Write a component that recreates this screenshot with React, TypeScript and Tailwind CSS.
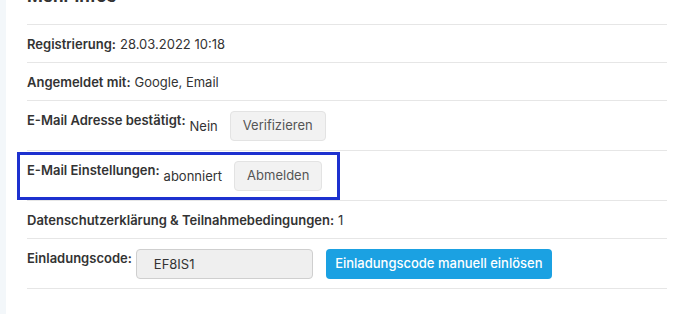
import React from "react";

type Row = {
  label: string;
  value?: string;
  button?: string;
  highlight?: boolean;
};

const rows: Row[] = [
  { label: "Registrierung:", value: "28.03.2022 10:18" },
  { label: "Angemeldet mit:", value: "Google, Email" },
  { label: "E-Mail Adresse bestätigt:", value: "Nein", button: "Verifizieren" },
  {
    label: "E-Mail Einstellungen:",
    value: "abonniert",
    button: "Abmelden",
    highlight: true,
  },
  { label: "Datenschutzerklärung & Teilnahmebedingungen:", value: "1" },
];

export default function App() {
  return (
    <div
      className="flex h-[314px] w-[688px] overflow-hidden bg-[#f3f7fa] text-[13px] text-[#333]"
      style={{ fontFamily: "Inter, 'Noto Sans', sans-serif" }}
    >
      <div className="ml-[6px] flex-1 bg-white px-[21px]">
        <h2 className="-mt-[14px] mb-[18px] text-[17px] font-bold leading-[20px] text-[#333]">
          Mehr Infos
        </h2>

        <div className="border-t border-[#e6e6e6]">
          {rows.map((row) => (
            <div
              key={row.label}
              className="relative flex items-start border-b border-[#e6e6e6] pt-[10px] pb-[9px]"
            >
              <span className="font-semibold leading-[18px]">{row.label}</span>

              {row.button ? (
                <div className="flex items-center">
                  <span className="ml-[4px] leading-[30px]">{row.value}</span>
                  <button
                    type="button"
                    className="ml-[12px] h-[30px] rounded-[4px] border border-[#e3e3e3] bg-[#f2f2f2] px-[12px] text-[13px] text-[#555]"
                  >
                    {row.button}
                  </button>
                </div>
              ) : (
                <span className="ml-[4px] leading-[18px]">{row.value}</span>
              )}

              {row.highlight && (
                <div className="pointer-events-none absolute -left-[10px] top-[1px] h-[48px] w-[323px] border-[3px] border-[#1d31cf]" />
              )}
            </div>
          ))}

          <div className="flex items-start border-b border-[#e6e6e6] pt-[10px] pb-[9px]">
            <span className="font-semibold leading-[18px]">Einladungscode:</span>
            <input
              readOnly
              value="EF8IS1"
              className="ml-[4px] h-[30px] w-[177px] rounded-[4px] border border-[#cfcfcf] bg-[#efefef] px-[17px] text-[13px] text-[#333] outline-none"
            />
            <button
              type="button"
              className="ml-[13px] h-[30px] w-[226px] rounded-[4px] bg-[#1ba1e2] text-[13px] font-medium text-white"
            >
              Einladungscode manuell einlösen
            </button>
          </div>
        </div>
      </div>
    </div>
  );
}
